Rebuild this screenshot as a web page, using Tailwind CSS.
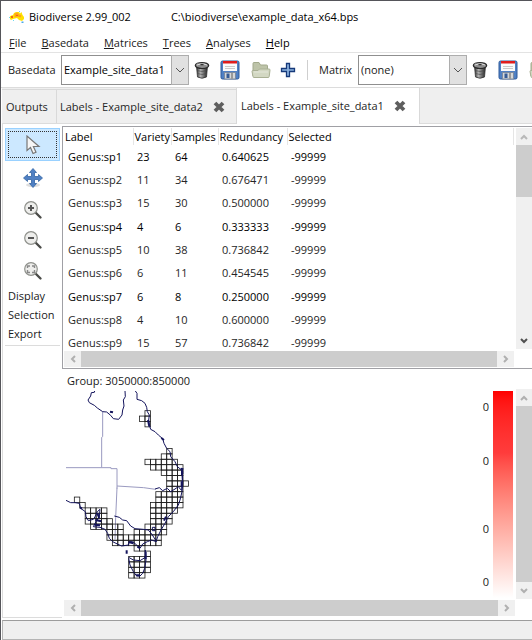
<!DOCTYPE html>
<html lang="en">
<head>
  <meta charset="UTF-8" />
  <meta name="viewport" content="width=device-width, initial-scale=1" />
  <title>Biodiverse 2.99_002</title>
  <script src="https://cdn.jsdelivr.net/npm/@tailwindcss/browser@4"></script>
</head>
<body class="min-h-screen flex flex-col bg-white border-t border-l border-[#55555a] font-['Open_Sans','Noto_Sans',sans-serif] text-[11px] leading-4 text-[#1a1a1a] overflow-x-hidden">

  <svg class="absolute w-0 h-0">
    <defs>
      <linearGradient id="metal" x1="0" x2="1" y1="0" y2="0">
        <stop offset="0" stop-color="#2e2e2e" /><stop offset=".35" stop-color="#b4b4b4" /><stop offset=".7" stop-color="#666" /><stop offset="1" stop-color="#222" />
      </linearGradient>
    </defs>
    <symbol id="trash" viewBox="0 0 16 18">
      <path d="M2.500 5h11l-1 11q-4.500 2.500-9 0z" fill="url(#metal)" stroke="#333" stroke-width=".8" />
      <path d="M3 9.500q5 2 10 0M3.500 12.500q4.500 2 9 0" stroke="#444" stroke-width=".6" fill="none" />
      <ellipse cx="8" cy="4.500" rx="6.700" ry="3" fill="#8c8c8c" stroke="#2a2a2a" stroke-width="1.200" />
      <path d="M3 4q5-3 10 0" stroke="#ddd" fill="none" />
      <path d="M6.500 3.500h3" stroke="#333" stroke-width="1.500" />
    </symbol>
    <symbol id="save" viewBox="0 0 20 20">
      <rect x="1" y="1" width="18" height="18" rx="1.500" fill="#4f80c4" stroke="#2f5a9b" />
      <rect x="3" y="1" width="14" height="10" fill="#fafafa" />
      <rect x="3" y="1" width="14" height="2.500" fill="#e01b1b" />
      <path d="M5 6.500h10M5 8.500h10" stroke="#c9c9c9" />
      <rect x="4.500" y="12.500" width="11" height="6.500" fill="#d5d7d8" stroke="#7c8ba1" />
      <rect x="6.500" y="13.500" width="3" height="4.500" fill="#355b95" />
      <path d="M12 13v6" stroke="#999" stroke-width="2" />
    </symbol>
    <symbol id="folder" viewBox="0 0 20 18">
      <path d="M2 15V2.500q0-1 1-1h5l1.500 2.500h6q1 0 1 1V9" fill="#bdc3a8" stroke="#a2a98b" />
      <path d="M1 10.500q0-1 1-1h5l1.500-1.500H18q1.200 0 1 1.200l-.8 6.300q0 1-1 1H3q-1 0-1-1z" fill="#d3d8c3" stroke="#a9b094" />
      <path d="M3 11h14" stroke="#e4e7da" />
    </symbol>
    <symbol id="close" viewBox="0 0 12 12">
      <path d="M2 2l8 8M10 2l-8 8" stroke="#5e5e5e" stroke-width="3.800" />
    </symbol>
    <symbol id="lens" viewBox="0 0 20 20">
      <path d="M12.500 12.500L17.500 17.500" stroke="#4a4b48" stroke-width="2.400" stroke-linecap="round" />
      <circle cx="8" cy="8" r="6.300" fill="#eeeeec" stroke="#8f918c" stroke-width="1.200" />
    </symbol>
    <symbol id="up" viewBox="0 0 8 8"><path d="M1 6l3-3 3 3" fill="none" stroke="currentColor" stroke-width="2" /></symbol>
    <symbol id="down" viewBox="0 0 8 8"><path d="M1 2l3 3 3-3" fill="none" stroke="currentColor" stroke-width="2" /></symbol>
    <symbol id="left" viewBox="0 0 8 8"><path d="M6 1L3 4l3 3" fill="none" stroke="currentColor" stroke-width="2" /></symbol>
    <symbol id="right" viewBox="0 0 8 8"><path d="M2 1l3 3-3 3" fill="none" stroke="currentColor" stroke-width="2" /></symbol>
  </svg>

  <!-- title bar -->
  <header class="h-8 flex items-center pl-2 gap-10 text-black">
    <h1 class="flex items-center gap-1">
      <svg class="w-4 h-3" viewBox="0 0 16 12">
        <path d="M1 5l3-1 1-2 2-1 3 0 1 1.500 1.500-1.500 1 3 1.500 2v2l-2 2-3-1-2-2-4 1-2 1-1-1z" fill="#ffe100" />
        <path d="M5.500 2.500l3-1 1.500 2 2.500 1-1 2-3-1-3 1z" fill="#ffa21a" />
        <path d="M7 4h2v1H7zM2 5h2v2H2z" fill="#f0641e" />
        <path d="M0 6h1v1H0zM4 9h1v1H4zM10 0h1v1h-1z" fill="#6fd8f0" />
        <path d="M12.500 10.500h2v1.500h-2z" fill="#4aa8e8" />
      </svg>
      Biodiverse 2.99_002
    </h1>
    <span>C:\biodiverse\example_data_x64.bps</span>
  </header>

  <nav class="h-5 flex items-center pl-2 gap-[15px] border-b border-[#e3e3e3]">
    <button><u>F</u>ile</button>
    <button><u>B</u>asedata</button>
    <button><u>M</u>atrices</button>
    <button><u>T</u>rees</button>
    <button><u>A</u>nalyses</button>
    <button class="text-black"><u>H</u>elp</button>
  </nav>

  <!-- toolbar -->
  <div class="h-[35px] flex items-center pl-[7px] border-b border-[#dcdcdc] overflow-hidden">
    <label for="basedata" class="w-[53px] shrink-0">Basedata</label>
    <div class="relative w-32 h-[30px] shrink-0">
      <select id="basedata" class="appearance-none w-full h-full pl-[2px] bg-white border border-[#8f8f8f] text-black">
        <option>Example_site_data1</option>
        <option>Example_site_data2</option>
      </select>
      <span class="absolute right-0 inset-y-0 w-[18px] flex items-center justify-center bg-[#e1e1e1] border border-[#adadad] pointer-events-none">
        <svg class="w-2 h-2" viewBox="0 0 8 8"><path d="M0 2l4 4 4-4" fill="none" stroke="#555" /></svg>
      </span>
    </div>
    <button aria-label="Delete basedata" class="ml-[5px] shrink-0"><svg class="w-4 h-[18px]"><use href="#trash" /></svg></button>
    <button aria-label="Save basedata" class="ml-2.5 shrink-0"><svg class="w-5 h-5"><use href="#save" /></svg></button>
    <button aria-label="Open basedata" class="ml-[11px] shrink-0"><svg class="w-5 h-[18px]"><use href="#folder" /></svg></button>
    <button aria-label="New basedata" class="ml-[9px] shrink-0">
      <svg class="w-4 h-4" viewBox="0 0 16 16"><path d="M6.500 1.500h3v5h5v3h-5v5h-3v-5h-5v-3h5z" fill="#8db4e0" stroke="#16397a" stroke-width="1.300" /></svg>
    </button>
    <div class="w-px h-5 ml-[11px] bg-[#cfcfcf] shrink-0"></div>
    <label for="matrix" class="w-[39px] ml-[11px] shrink-0">Matrix</label>
    <div class="relative w-[109px] h-[30px] shrink-0">
      <select id="matrix" class="appearance-none w-full h-full pl-[2px] bg-white border border-[#8f8f8f]">
        <option>(none)</option>
      </select>
      <span class="absolute right-0 inset-y-0 w-[18px] flex items-center justify-center bg-[#e1e1e1] border border-[#adadad] pointer-events-none">
        <svg class="w-2 h-2" viewBox="0 0 8 8"><path d="M0 2l4 4 4-4" fill="none" stroke="#555" /></svg>
      </span>
    </div>
    <button aria-label="Delete matrix" class="ml-[5px] shrink-0"><svg class="w-4 h-[18px]"><use href="#trash" /></svg></button>
    <button aria-label="Save matrix" class="ml-2.5 shrink-0"><svg class="w-5 h-5"><use href="#save" /></svg></button>
    <button aria-label="Open matrix" class="ml-[11px] shrink-0"><svg class="w-5 h-[18px]"><use href="#folder" /></svg></button>
  </div>

  <!-- tabs -->
  <div class="h-9 flex ml-px bg-[#efefef] border-b border-[#dcdcdc] text-[#262626]">
    <div class="w-[55px] flex items-center pl-1 border-t border-r border-[#d9d9d9] mt-px"><button>Outputs</button></div>
    <div class="w-[179px] flex items-center justify-between pl-[3px] pr-[11px] border-t border-[#d9d9d9] mt-px">
      <button>Labels - Example_site_data2</button>
      <button aria-label="Close tab"><svg class="w-3 h-3"><use href="#close" /></svg></button>
    </div>
    <div class="w-[184px] flex items-center justify-between pl-1 pr-[13px] -mb-px bg-white border-x border-[#d9d9d9]">
      <button>Labels - Example_site_data1</button>
      <button aria-label="Close tab"><svg class="w-3 h-3"><use href="#close" /></svg></button>
    </div>
  </div>

  <main class="flex-1 flex pt-[2px] ml-px border-l border-[#dcdcdc]">
    <aside class="w-[59px] shrink-0 flex flex-col border-b border-[#dcdcdc]">
      <div class="flex flex-col ml-[2px] mr-[2px] mt-[2px] pb-[2px] border-b border-[#dcdcdc]">
        <button aria-label="Select" class="h-[33px] p-[2px] bg-[#cce8ff] border border-[#99d1ff]">
          <span class="flex h-full items-center justify-center border border-dotted border-[#333]">
            <svg class="w-4 h-5" viewBox="0 0 16 20"><path d="M2 1v14.500l3.500-3 2.500 6 3-1.300-2.600-5.700H14z" fill="#f6f6f6" stroke="#777" stroke-width="1.200" /></svg>
          </span>
        </button>
        <button aria-label="Pan" class="h-[33px] flex items-center justify-center">
          <svg class="w-5 h-5" viewBox="0 0 20 20">
            <ellipse cx="10" cy="17" rx="7" ry="2" fill="#dedede" />
            <path d="M10 .5l3.500 4h-2V8.500h4v-2l4 3.500-4 3.500v-2h-4v4h2L10 19.500l-3.500-4h2v-4h-4v2L.5 10l4-3.500v2h4V4.500h-2z" fill="#4f80c4" stroke="#3465a4" stroke-width=".8" />
          </svg>
        </button>
        <button aria-label="Zoom in" class="h-[31px] flex items-center justify-center">
          <svg class="w-5 h-5"><use href="#lens" /><path d="M5 8h6M8 5v6" stroke="#555" stroke-width="2" /></svg>
        </button>
        <button aria-label="Zoom out" class="h-[30px] flex items-center justify-center">
          <svg class="w-5 h-5"><use href="#lens" /><path d="M5 8h6" stroke="#555" stroke-width="2" /></svg>
        </button>
        <button aria-label="Zoom to fit" class="h-[31px] flex items-center justify-center">
          <svg class="w-5 h-5"><use href="#lens" /><path d="M4.500 7V5H7M9 5h2.500v2M11.500 9v2.500H9M7 11.500H4.500V9" fill="none" stroke="#888" stroke-width="1.400" /></svg>
        </button>
        <button class="h-[19px] pl-[3px] text-left">Display</button>
        <button class="h-[19px] pl-[3px] text-left">Selection</button>
        <button class="h-[19px] pl-[3px] text-left">Export</button>
      </div>
    </aside>

    <div class="flex-1 min-w-0 flex flex-col pb-[2px]">
      <!-- label list -->
      <section class="flex border-y border-l border-[#a0a0a5] pt-px pl-px pb-px">
        <div class="flex-1 min-w-0">
          <div class="h-[223px] overflow-hidden">
            <table class="w-full h-[227px] table-fixed border-collapse text-left">
              <colgroup>
                <col class="w-[69px]" /><col class="w-[38px]" /><col class="w-[47px]" /><col class="w-[69px]" /><col />
              </colgroup>
              <thead class="text-black">
                <tr class="h-[17px]">
                  <th class="p-0 pl-px font-normal border-r border-[#e5e5e5]">Label</th>
                  <th class="p-0 pl-px font-normal border-r border-[#e5e5e5]">Variety</th>
                  <th class="p-0 pl-px font-normal border-r border-[#e5e5e5]">Samples</th>
                  <th class="p-0 pl-px font-normal border-r border-[#e5e5e5]">Redundancy</th>
                  <th class="p-0 pl-px font-normal border-r border-[#e5e5e5]">Selected</th>
                </tr>
              </thead>
              <tbody id="labels"></tbody>
            </table>
          </div>
          <div class="h-4 flex bg-[#cdcdcd] text-[#b0b0b0]">
            <span class="w-[17px] flex items-center justify-center bg-[#f0f0f0]"><svg class="w-2 h-2"><use href="#left" /></svg></span>
            <span class="w-[17px] ml-auto flex items-center justify-center bg-[#f0f0f0]"><svg class="w-2 h-2"><use href="#right" /></svg></span>
          </div>
        </div>
        <div class="w-4 h-[221px] ml-[2px] flex flex-col bg-[#f0f0f0]">
          <span class="h-[17px] flex items-center justify-center text-[#b8b8b8]"><svg class="w-2 h-2"><use href="#up" /></svg></span>
          <span class="h-[52px] bg-[#cdcdcd]"></span>
          <span class="h-[17px] mt-auto flex items-center justify-center text-[#505050]"><svg class="w-2 h-2"><use href="#down" /></svg></span>
        </div>
      </section>

      <!-- map -->
      <p class="h-5 pl-[5px] pt-[4px]">Group: 3050000:850000</p>
      <section class="flex-1 flex pl-[2px]">
        <div class="flex-1 min-w-0 flex flex-col">
          <div class="flex-1 flex justify-between pt-[2px] pl-[2px] pb-[2px]">
            <svg class="w-[126px] h-[190px]" viewBox="0 0 378 570" fill="none">
              <g stroke="#9a9ac0" stroke-width="3">
                <path d="M110 62v75l-3 2v90M0 230h135v3h18v60" />
                <path d="M153 285l80 5 36 5M153 290l-4 90-2 65" />
              </g>
              <g id="cells" stroke="#1c1c1c" stroke-width="2.400"></g>
              <g stroke="#14145c" stroke-width="3" stroke-linejoin="round">
                <!-- northern coast -->
                <g transform="translate(-18 -63)">
                  <path d="M104 63L103 67 94 68 92 78 84 90 88 98 103 106 112 114 128 125 140 126 152 136 160 146 176 148 186 135 188 120 192 108 190 90 196 80 195 63" />
                  <path d="M226 63L231 70 231 88 245 92 255 100 260 112 262 125 268 135 266 150 268 165 272 178 285 185 295 195 308 206 312 220 320 235 330 245 332 260 345 275 352 290 365 300 367 330 365 360" />
                  <path d="M150 125l9 2M304 204l8 6M264 150l4 20M362 296l8 2M366 296v20" stroke-width="6" />
                </g>
                <!-- southern coast and Tasmania -->
                <g transform="translate(-18 237)">
                  <path d="M367 0L368 40 366 65 360 90 355 105 340 125 325 140 315 160 303 180 293 200 288 215 275 210 262 215 248 222 240 235 230 225 218 215 208 215 205 225 185 228 172 222 158 215 148 205 143 190 135 178 120 172 100 170 108 155 118 140 120 118 112 125 105 140 100 148 85 152 78 140 76 125 62 115 58 100 45 98 32 98 18 91" />
                  <path d="M163 138L178 142 188 150 200 152 212 168 225 176 250 178 265 180 275 192 290 215" />
                  <path d="M285 57L298 53 308 62 322 55 332 65 345 57 355 50 365 62" />
                  <path d="M206 262L220 270 240 272 256 262 256 240 258 270 254 295 248 310 240 318 230 318 220 305 210 285 206 265M277 172h8v10h-8z" />
                  <path d="M106 150l18 4M104 164l16 2M112 130l6 14M206 216l14 4M232 230l8 4M257 245v22M367 2v10M365 34v18M228 316h12M200 241v10M318 140l-6 12M60 112l6 4" stroke-width="6" />
                </g>
              </g>
            </svg>
            <div class="flex gap-1 pr-[2px]">
              <div class="flex flex-col pt-2">
                <span>0</span>
                <span class="mt-[38px]">0</span>
                <span class="mt-[52px]">0</span>
                <span class="mt-[37px]">0</span>
              </div>
              <div class="w-5 bg-linear-to-b from-[#ff0000] via-[#ff3c3c] via-30% to-white"></div>
            </div>
          </div>
          <div class="h-4 flex bg-[#cdcdcd] text-[#b0b0b0]">
            <span class="w-[17px] flex items-center justify-center bg-[#f0f0f0]"><svg class="w-2 h-2"><use href="#left" /></svg></span>
            <span class="w-[17px] ml-auto flex items-center justify-center bg-[#f0f0f0]"><svg class="w-2 h-2"><use href="#right" /></svg></span>
          </div>
        </div>
        <div class="w-4 ml-px mb-[17px] flex flex-col bg-[#cdcdcd] text-[#b0b0b0]">
          <span class="h-[17px] flex items-center justify-center bg-[#f0f0f0]"><svg class="w-2 h-2"><use href="#up" /></svg></span>
          <span class="h-[17px] mt-auto flex items-center justify-center bg-[#f0f0f0]"><svg class="w-2 h-2"><use href="#down" /></svg></span>
        </div>
      </section>
    </div>
  </main>

  <!-- status bar -->
  <footer class="h-5 ml-px mt-[2px] bg-[#efefef] border-t border-b border-l border-t-[#9c9c9c] border-b-[#b4b4b4] border-l-[#b4b4b4]"></footer>

  <script>
    const labels = [
      ['Genus:sp1', 23, 64, '0.640625', -99999],
      ['Genus:sp2', 11, 34, '0.676471', -99999],
      ['Genus:sp3', 15, 30, '0.500000', -99999],
      ['Genus:sp4', 4, 6, '0.333333', -99999],
      ['Genus:sp5', 10, 38, '0.736842', -99999],
      ['Genus:sp6', 6, 11, '0.454545', -99999],
      ['Genus:sp7', 6, 8, '0.250000', -99999],
      ['Genus:sp8', 4, 10, '0.600000', -99999],
      ['Genus:sp9', 15, 57, '0.736842', -99999],
    ];

    document.getElementById('labels').innerHTML = labels.map((row, i) => `
      <tr class="${i % 3 === 0 ? 'text-black' : 'text-[#262626]'}">
        ${row.map(v => `<td class="p-0 pl-1">${v}</td>`).join('')}
      </tr>
    `).join('');

    // occupied map cells: [row, first column, last column]
    const runs = [
      [0, 13, 13], [1, 12, 13], [2, 13, 13], [7, 17, 17], [8, 16, 17],
      [9, 13, 18], [10, 14, 19], [11, 16, 19], [12, 17, 19], [13, 17, 20],
      [14, 17, 19], [15, 15, 19], [16, 15, 19], [16, 0, 0], [17, 14, 19],
      [17, 1, 1], [18, 14, 18], [18, 2, 5], [19, 14, 17], [19, 2, 5],
      [20, 14, 17], [20, 2, 6], [21, 13, 16], [21, 3, 8], [22, 11, 16],
      [22, 6, 8], [23, 6, 15], [24, 7, 15], [25, 11, 12], [26, 13, 13],
      [27, 10, 13], [28, 10, 13], [29, 10, 13], [30, 10, 12],
    ];
    let cells = '';
    runs.forEach(([row, first, last]) => {
      for (let col = first; col <= last; col++) {
        cells += `<rect x="${25 + col * 16.3}" y="${59 + row * 16.2}" width="16.3" height="16.2" />`;
      }
    });
    document.getElementById('cells').innerHTML = cells;
  </script>
</body>
</html>
